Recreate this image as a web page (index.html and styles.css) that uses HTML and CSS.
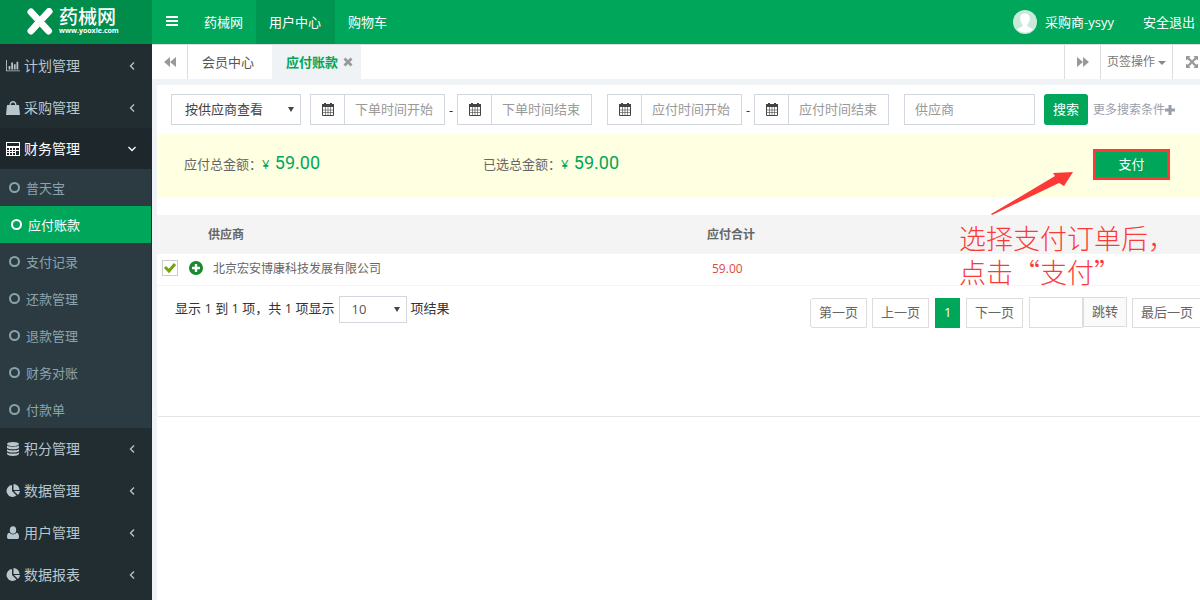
FILE: index.html
```html
<!DOCTYPE html>
<html lang="zh-CN">
<head>
<meta charset="utf-8">
<title>应付账款 - 药械网</title>
<link rel="stylesheet" href="styles.css">
</head>
<body>
<svg class="sprite" aria-hidden="true">
  <symbol id="i-chart" viewBox="0 0 16 14"><path d="M0 0h1v12h15v1H0zM3 7h2v4H3zM6 3h2v8H6zM9 5h2v6H9zM12 2h2v9h-2z"/></symbol>
  <symbol id="i-bag" viewBox="0 0 14 14"><path d="M1 4h2.500C3.500-1.200 10.500-1.200 10.500 4H13l1 10H0zM4.800 4h4.400C9.200.5 4.800.5 4.800 4z" fill-rule="evenodd"/></symbol>
  <symbol id="i-calc" viewBox="0 0 14 14"><path fill-rule="evenodd" d="M0 0h14v14H0zM1 1v3h12V1zM1 6v2h2V6zM4 6v2h2V6zM7 6v2h2V6zM10 6v2h3V6zM1 9v1h2V9zM4 9v1h2V9zM7 9v1h2V9zM1 11v2h2v-2zM4 11v2h2v-2zM7 11v2h2v-2zM10 9v4h3V9z"/></symbol>
  <symbol id="i-db" viewBox="0 0 12 14"><ellipse cx="6" cy="2" rx="6" ry="2"/><path d="M0 3.600c2 1.600 10 1.600 12 0V6c-2 1.700-10 1.700-12 0zM0 7.200c2 1.600 10 1.600 12 0v2c-2 1.700-10 1.700-12 0zM0 10.600c2 1.600 10 1.600 12 0v1.400c-1 2.600-11 2.600-12 0z"/></symbol>
  <symbol id="i-pie" viewBox="0 0 14 14"><path d="M6 1v6l4.500 4.500A6 6 0 1 1 6 1zM7.500 0A6 6 0 0 1 13.500 6h-6zM8 7h6a6 6 0 0 1-2 4z"/></symbol>
  <symbol id="i-user" viewBox="0 0 12 14"><ellipse cx="6" cy="4" rx="3.200" ry="3.800"/><path d="M0 11c0-3 1-4 2.500-4.200C4.500 9 7.500 9 9.500 6.800 11 7 12 8 12 11c0 1.500-.8 2-2 2H2c-1.200 0-2-.5-2-2z"/></symbol>
  <symbol id="i-left" viewBox="0 0 6 8"><path d="M5 .5 1.500 4 5 7.500" fill="none" stroke="currentColor" stroke-width="1.300"/></symbol>
  <symbol id="i-down" viewBox="0 0 8 6"><path d="M.5 1 4 4.500 7.500 1" fill="none" stroke="currentColor" stroke-width="1.300"/></symbol>
  <symbol id="i-back" viewBox="0 0 12 10"><path d="M6 0v10L0 5zM12 0v10L6 5z"/></symbol>
  <symbol id="i-next" viewBox="0 0 12 10"><path d="M0 0v10l6-5zM6 0v10l6-5z"/></symbol>
  <symbol id="i-close" viewBox="0 0 10 10"><path d="m1.500 1.500 7 7m0-7-7 7" stroke="currentColor" stroke-width="2.800"/></symbol>
  <symbol id="i-bars" viewBox="0 0 12 11"><path d="M0 0h12v2H0zM0 4h12v2H0zM0 8h12v2H0z"/></symbol>
  <symbol id="i-expand" viewBox="0 0 12 12"><path d="M0 0h4.500L3.200 1.600 6 4.400l2.800-2.800L7.500 0H12v4.500l-1.600-1.300L7.600 6l2.800 2.800L12 7.500V12H7.500l1.300-1.600L6 7.600l-2.800 2.800L4.500 12H0V7.500l1.600 1.300L4.400 6 1.600 3.200 0 4.500z"/></symbol>
  <symbol id="i-cal" viewBox="0 0 12 13"><path d="M0 1h2V0h2v1h4V0h2v1h2v3H0z"/><path d="M.5 4v8.500h11V4" fill="none" stroke="currentColor"/><path d="M3.500 4v8M6 4v8M8.500 4v8M1 7h10M1 9.500h10" stroke="currentColor" stroke-width=".6" fill="none"/></symbol>
  <symbol id="i-plus" viewBox="0 0 10 10"><path d="M3.500 0h3v3.500H10v3H6.500V10h-3V6.500H0v-3h3.500z"/></symbol>
</svg>
<div class="app">
  <aside class="sidebar">
    <a class="logo" href="#">
      <svg class="logo-mark" viewBox="0 0 26 27"><path d="M4 4 21.500 23M4 23 9.500 17M16 10l6-6.500" stroke="#fff" stroke-width="7" stroke-linecap="round" fill="none"/><path d="M8 17.500 17 8.500" stroke="#fff" stroke-width="5"/></svg>
      <span class="logo-text"><strong>药械网</strong><small>www.yooxie.com</small></span>
    </a>
    <nav>
      <a class="group" href="#"><svg class="gi"><use href="#i-chart"/></svg><span>计划管理</span><svg class="chev"><use href="#i-left"/></svg></a>
      <a class="group" href="#"><svg class="gi"><use href="#i-bag"/></svg><span>采购管理</span><svg class="chev"><use href="#i-left"/></svg></a>
      <a class="group open" href="#"><svg class="gi"><use href="#i-calc"/></svg><span>财务管理</span><svg class="chev"><use href="#i-down"/></svg></a>
      <div class="submenu">
        <a href="#">普天宝</a>
        <a class="current" href="#">应付账款</a>
        <a href="#">支付记录</a>
        <a href="#">还款管理</a>
        <a href="#">退款管理</a>
        <a href="#">财务对账</a>
        <a href="#">付款单</a>
      </div>
      <a class="group" href="#"><svg class="gi"><use href="#i-db"/></svg><span>积分管理</span><svg class="chev"><use href="#i-left"/></svg></a>
      <a class="group" href="#"><svg class="gi"><use href="#i-pie"/></svg><span>数据管理</span><svg class="chev"><use href="#i-left"/></svg></a>
      <a class="group" href="#"><svg class="gi"><use href="#i-user"/></svg><span>用户管理</span><svg class="chev"><use href="#i-left"/></svg></a>
      <a class="group" href="#"><svg class="gi"><use href="#i-pie"/></svg><span>数据报表</span><svg class="chev"><use href="#i-left"/></svg></a>
    </nav>
  </aside>
  <div class="main">
    <header class="topbar">
      <button class="toggle" aria-label="菜单"><svg width="12" height="11"><use href="#i-bars"/></svg></button>
      <a href="#">药械网</a>
      <a class="on" href="#">用户中心</a>
      <a href="#">购物车</a>
      <a class="account" href="#"><svg class="avatar" viewBox="0 0 24 24"><circle cx="12" cy="12" r="12" fill="#c9eadb"/><path d="M12 3.500c3.500 0 5 2.500 4.800 5.500-.2 2.500-1.300 4-2.300 5v2c1 1.500 4 1.700 5.500 3.500a12 12 0 0 1-16 0C5.500 17.700 8.500 17.500 9.500 16v-2c-1-1-2.100-2.500-2.300-5C7 6 8.500 3.500 12 3.500z" fill="#fff"/></svg>采购商-ysyy</a>
      <a class="logout" href="#">安全退出</a>
    </header>
    <div class="tabs">
      <button class="step first" aria-label="向左"><svg width="12" height="10"><use href="#i-back"/></svg></button>
      <a class="tab" href="#">会员中心</a>
      <a class="tab active" href="#">应付账款<svg width="10" height="10"><use href="#i-close"/></svg></a>
      <button class="step right" aria-label="向右"><svg width="12" height="10"><use href="#i-next"/></svg></button>
      <button class="ops">页签操作<i class="caret"></i></button>
      <button class="step full" aria-label="全屏"><svg width="12" height="12"><use href="#i-expand"/></svg></button>
    </div>
    <main class="content">
      <form class="filters">
        <select class="view" aria-label="查看方式"><option>按供应商查看</option></select>
        <div class="range">
          <label class="date"><span><svg width="12" height="13"><use href="#i-cal"/></svg></span><input placeholder="下单时间开始"></label>
          <b>-</b>
          <label class="date"><span><svg width="12" height="13"><use href="#i-cal"/></svg></span><input placeholder="下单时间结束"></label>
        </div>
        <div class="range">
          <label class="date"><span><svg width="12" height="13"><use href="#i-cal"/></svg></span><input placeholder="应付时间开始"></label>
          <b>-</b>
          <label class="date"><span><svg width="12" height="13"><use href="#i-cal"/></svg></span><input placeholder="应付时间结束"></label>
        </div>
        <input class="vendor" placeholder="供应商" aria-label="供应商">
        <button class="search" type="button">搜索</button>
        <a class="more" href="#">更多搜索条件<svg width="10" height="10"><use href="#i-plus"/></svg></a>
      </form>
      <section class="summary">
        <p>应付总金额：<em>¥ <strong>59.00</strong></em></p>
        <p>已选总金额：<em>¥ <strong>59.00</strong></em></p>
        <button class="pay">支付</button>
        <div class="note">
          <svg class="arrow" viewBox="0 0 84 46"><path d="M1 43 65 5 63 2 83 1 74 15 69 12 2 44z" fill="#fb3a38"/></svg>
          <span>选择支付订单后，<br>点击“支付”</span>
        </div>
      </section>
      <table class="list">
        <thead><tr><th class="pick"></th><th class="name">供应商</th><th class="sum">应付合计</th><th></th></tr></thead>
        <tbody><tr>
          <td class="pick"><div><input type="checkbox" checked aria-label="选择"><svg width="14" height="14" viewBox="0 0 14 14"><circle cx="7" cy="7" r="7" fill="#198a2e"/><path d="M7 3v8M3 7h8" stroke="#fff" stroke-width="2.400"/></svg></div></td>
          <td class="name">北京宏安博康科技发展有限公司</td><td class="sum">59.00</td><td></td>
        </tr></tbody>
      </table>
      <footer class="foot">
        <label class="info">显示 1 到 1 项，共 1 项显示 <select><option>10</option></select> 项结果</label>
        <div class="pager">
          <button class="first-page">第一页</button>
          <button>上一页</button>
          <button class="now">1</button>
          <button>下一页</button>
          <span class="jump"><input aria-label="页码"><button>跳转</button></span>
          <button>最后一页</button>
        </div>
      </footer>
    </main>
  </div>
</div>
</body>
</html>
```

FILE: styles.css
```css
*, *::before { box-sizing: border-box; }
body {
  margin: 0;
  font: 13px/20px "Open Sans", "Noto Sans CJK SC", sans-serif;
  color: #333;
  background: #fff;
}
a { color: inherit; text-decoration: none; }
button, input, select { font: inherit; color: inherit; margin: 0; border-radius: 0; }
button { border: 0; background: none; padding: 0; white-space: nowrap; }
svg { fill: currentColor; flex: none; }
.sprite { position: absolute; width: 0; height: 0; }
.app { display: flex; min-height: 100vh; overflow: hidden; }

/* sidebar */
.sidebar { width: 152px; flex: none; background: #222d32; color: #b8c7ce; height: 100vh; overflow: hidden; }
.logo { display: flex; align-items: center; gap: 6px; height: 44px; padding: 0 27px 2px; background: #008d4c; color: #fff; }
.logo-mark { width: 26px; height: 27px; }
.logo-text { display: flex; flex-direction: column; }
.logo-text strong { font-size: 19px; line-height: 20px; font-weight: 500; }
.logo-text small { font: bold 7px/8px "Open Sans", sans-serif; }
.group { display: flex; align-items: center; height: 42px; padding: 2px 16px 0 6px; font-size: 14px; }
.group span { flex: 1; }
.gi { width: 14px; height: 14px; margin-right: 4px; }
.chev { width: 8px; height: 8px; }
.group.open { height: 41px; padding-top: 0; background: #1e282c; color: #fff; }
.submenu ~ .group { padding-top: 0; }
.submenu { background: #2c3b41; margin-right: 1px; color: #8aa4af; }
.submenu a { display: flex; align-items: center; gap: 6px; height: 37px; padding-left: 9px; }
.submenu a::before { content: ""; width: 11px; height: 11px; border: 2px solid; border-radius: 50%; }
.submenu .current { background: #00a65a; color: #fff; padding-left: 11px; }

/* top bar */
.main { flex: 1; min-width: 0; }
.topbar { display: flex; height: 44px; background: #00a65a; color: #fff; line-height: 44px; }
.topbar a { padding: 0 13px; white-space: nowrap; }
.topbar .on { padding-right: 14px; background: #009551; }
.toggle { width: 39px; padding-bottom: 4px; }
.topbar .account { display: flex; align-items: center; gap: 8px; margin-left: auto; padding-right: 16px; }
.avatar { width: 24px; height: 24px; }
.topbar .logout { padding-right: 5px; }

/* tabs */
.tabs { display: flex; height: 35px; border-top: 1px solid #ddd; line-height: 34px; color: #999; }
.step { width: 36px; line-height: 0; }
.first { border-right: 1px solid #ddd; }
.tab { padding: 0 18px 0 14px; color: #555; white-space: nowrap; }
.tab.active { display: flex; align-items: center; gap: 5px; padding-right: 8px; background: #eff3f5; color: #00a65a; font-weight: bold; }
.tab svg { color: #999; }
.right { margin-left: auto; border-left: 1px solid #ddd; }
.ops { width: 73px; border: solid #ddd; border-width: 0 1px; font-size: 12px; color: #777; }
.caret { display: inline-block; margin-left: 3px; border: 4px solid transparent; border-top-color: #888; border-bottom: 0; vertical-align: middle; }
.full { width: 27px; padding-left: 10px; }

/* content */
.content { border: solid #eff3f5; border-width: 6px 0 0 5px; min-height: calc(100vh - 79px); }
.filters { display: flex; align-items: center; padding: 9px 14px; }
.filters input, .filters select { height: 31px; padding: 0 10px 2px; border: 1px solid #d2d6de; background: #fff; outline: 0; }
select { appearance: none; }
.filters .view, .info select {
  background: #fff url("data:image/svg+xml,%3Csvg xmlns='http://www.w3.org/2000/svg' width='6' height='5'%3E%3Cpath d='M0 0h6L3 5z' fill='%23444'/%3E%3C/svg%3E") no-repeat right 6px center;
}
.filters .view { width: 130px; padding: 0 13px 2px; color: #444; }
input::placeholder { color: #999; opacity: 1; }
.range { display: flex; align-items: center; margin-left: 9px; }
.range + .range { margin-left: 15px; }
.range b { width: 12px; text-align: center; font-weight: normal; }
.date { display: flex; color: #444; }
.date span { display: flex; align-items: center; justify-content: center; width: 34px; border: 1px solid #d2d6de; border-right: 0; }
.date input { width: 101px; }
.vendor { width: 131px; margin-left: 15px; }
.search { width: 44px; height: 31px; margin: 0 5px 0 9px; padding-bottom: 2px; border-radius: 3px; background: #00a65a; color: #fff; }
.more { display: flex; align-items: center; font-size: 12px; color: #999eab; white-space: nowrap; }

.summary { position: relative; display: grid; grid-template-columns: 299px 1fr auto; align-items: center; height: 63px; padding: 0 30px 2px 27px; background: #ffffe1; color: #666; }
.summary p { margin: 0 0 2px; }
.summary em { font-style: normal; color: #00a65a; }
.summary strong { margin-left: 2px; font: 18px/20px Roboto, sans-serif; }
.pay { width: 77px; height: 31px; padding-bottom: 1px; background: #00a65a; color: #fff; border: 3px solid #fb3a38; }
.note { position: absolute; right: 30px; top: 37px; width: 211px; color: #fb3a38; font: 300 27px/34px "Noto Sans CJK SC", sans-serif; white-space: nowrap; }
.arrow { display: block; width: 84px; height: 46px; margin-left: 31px; }
.note span { display: block; margin-top: 4px; }

.list { width: 100%; margin-top: 18px; border-collapse: collapse; table-layout: fixed; font-size: 12px; color: #666; }
.list th { height: 39px; padding: 0; background: #f4f4f4; text-align: left; }
.list td { height: 31px; padding: 0; border-bottom: 1px solid #f4f4f4; }
.list th.pick { width: 51px; }
.list th.name { width: 499px; }
.list td.name { padding-left: 5px; }
.list td.sum { padding-left: 5px; color: #dd4b39; }
.pick div { display: flex; align-items: center; gap: 11px; padding: 0 0 2px 5px; }
.pick input { appearance: none; width: 16px; height: 16px; margin: 0; border: 1px solid #ccc; background: url("data:image/svg+xml,%3Csvg xmlns='http://www.w3.org/2000/svg' width='14' height='14'%3E%3Cpath d='M2 6l4 4 6-7' fill='none' stroke='%2376a30f' stroke-width='3'/%3E%3C/svg%3E") center; }

.foot { display: flex; justify-content: space-between; align-items: flex-start; height: 131px; padding: 10px 0 0 18px; border-bottom: 1px solid #e4e4e4; border-radius: 0 0 0 3px; }
.info { display: flex; gap: 4px; line-height: 24px; }
.info select { width: 68px; height: 27px; padding: 0 12px; border: 1px solid #d2d6de; color: #555; }
.pager { display: flex; gap: 5px; margin: 2px -2px 0 0; color: #666; }
.pager button { height: 30px; padding: 0 8px 2px; border: 1px solid #ddd; background: #fff; }
.pager .first-page { border-radius: 3px 0 0 3px; }
.pager .now { width: 25px; margin: 0 1px; border-color: #00a65a; background: #00a65a; color: #fff; }
.jump { display: flex; margin: -1px 0 0 1px; }
.jump input { width: 54px; height: 31px; border: 1px solid #ddd; }
.pager .jump button { background: #fafafa; }
```
